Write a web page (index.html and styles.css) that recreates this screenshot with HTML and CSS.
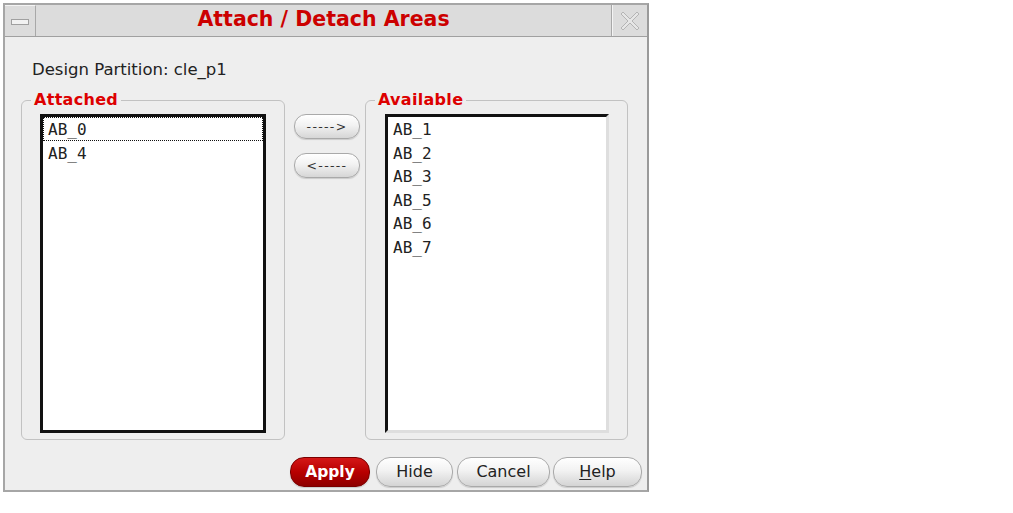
FILE: index.html
```html
<!DOCTYPE html>
<html>
<head>
<meta charset="utf-8">
<link rel="stylesheet" href="styles.css">
</head>
<body>
<div class="window">
  <div class="titlebar">
    <div class="tb-min"><span class="min-bar"></span></div>
    <div class="title">Attach / Detach Areas</div>
    <div class="tb-close">
      <svg width="22" height="22" viewBox="0 0 22 22">
        <path d="M2 4 L4 2 L11 9 L18 2 L20 4 L13 11 L20 18 L18 20 L11 13 L4 20 L2 18 L9 11 Z" fill="#e6e6e6" stroke="#b4b4b4" stroke-width="1"/>
      </svg>
    </div>
  </div>
  <div class="content">
    <div class="partition">Design Partition: cle_p1</div>
    <div class="groups">
      <fieldset class="group group-left">
        <legend>Attached</legend>
        <div class="listbox focused">
          <div class="row selected">AB_0</div>
          <div class="row">AB_4</div>
        </div>
      </fieldset>
      <div class="movers">
        <button class="mover">-----&gt;</button>
        <button class="mover">&lt;-----</button>
      </div>
      <fieldset class="group group-right">
        <legend>Available</legend>
        <div class="listbox">
          <div class="row">AB_1</div>
          <div class="row">AB_2</div>
          <div class="row">AB_3</div>
          <div class="row">AB_5</div>
          <div class="row">AB_6</div>
          <div class="row">AB_7</div>
        </div>
      </fieldset>
    </div>
    <div class="actions">
      <button class="btn btn-apply">Apply</button>
      <button class="btn btn-hide">Hide</button>
      <button class="btn btn-cancel">Cancel</button>
      <button class="btn btn-help"><u>H</u>elp</button>
    </div>
  </div>
</div>
</body>
</html>
```
FILE: styles.css
```css
html, body {
  margin: 0;
  padding: 0;
  background: #ffffff;
}
body {
  font-family: "DejaVu Sans", "Liberation Sans", sans-serif;
  color: #222;
}
.window {
  margin: 3px 0 0 3px;
  width: 642px;
  height: 485px;
  border: 2px solid #a6a6a6;
  border-right-color: #9a9a9a;
  background: #eeeeee;
  display: flex;
  flex-direction: column;
}
.titlebar {
  height: 31px;
  display: flex;
  border-bottom: 1px solid #a0a0a0;
  background: #dcdcdc;
}
.tb-min {
  width: 30px;
  border-right: 1px solid #a8a8a8;
  border-top: 1px solid #f4f4f4;
  display: flex;
  align-items: center;
  justify-content: center;
}
.min-bar {
  display: block;
  width: 16px;
  height: 4px;
  border: 1px solid #a0a0a0;
  background: #f2f2f2;
  margin-top: 2px;
}
.title {
  flex: 1;
  display: flex;
  align-items: center;
  justify-content: center;
  padding-bottom: 4px;
  font-weight: bold;
  font-size: 20.5px;
  color: #cc0000;
  border-right: 1px solid #a8a8a8;
}
.tb-close {
  width: 34px;
  display: flex;
  align-items: center;
  justify-content: center;
  border-left: 1px solid #f4f4f4;
}
.content {
  flex: 1;
  display: flex;
  flex-direction: column;
  padding: 23px 0 0 16px;
}
.partition {
  font-size: 16.5px;
  line-height: 20px;
  margin-left: 11px;
  color: #222;
}
.groups {
  display: flex;
  align-items: flex-start;
  margin-top: 12px;
}
.group {
  margin: 0;
  border: 1px solid #c2c2c2;
  border-radius: 6px;
  padding: 6px 18px 6px 18px;
  min-width: 0;
}
.group legend {
  font-weight: bold;
  font-size: 16px;
  letter-spacing: 0.3px;
  line-height: 16px;
  color: #dd0000;
  padding: 0 3px;
  margin-left: -9px;
}
.group-left {
  width: 226px;
}
.group-right {
  width: 224px;
  padding-left: 19px;
  margin-left: 5px;
}
.group-right legend {
  margin-left: -10px;
}
.listbox {
  box-sizing: border-box;
  height: 319px;
  background: #ffffff;
  border: 3px solid #111;
  border-right-color: #dedede;
  border-bottom-color: #dedede;
  font-family: "DejaVu Sans Mono", "Liberation Mono", monospace;
  font-size: 16px;
  color: #222;
}
.listbox.focused {
  border-color: #111;
}
.row {
  box-sizing: border-box;
  height: 23.5px;
  line-height: 18.5px;
  padding: 3px 0 0 4px;
  border: 1px solid transparent;
}
.row.selected {
  border: 1px dotted #111;
}
.movers {
  display: flex;
  flex-direction: column;
  gap: 14px;
  margin: 22px 0 0 9px;
}
.mover {
  width: 66px;
  height: 25px;
  padding: 0 0 1px 0;
  border: 1px solid #a9a9a9;
  border-radius: 12px;
  background: linear-gradient(#ffffff, #f2f2f2 45%, #d6d6d6);
  box-shadow: 0 1px 1px rgba(0,0,0,0.15);
  font-family: "DejaVu Sans", sans-serif;
  font-size: 12.5px;
  letter-spacing: 1.3px;
  color: #333;
}
.actions {
  display: flex;
  justify-content: flex-end;
  margin-top: 17px;
  padding-right: 5px;
}
.btn {
  box-sizing: border-box;
  height: 30px;
  margin: 0;
  border: 1px solid #a9a9a9;
  border-radius: 14px;
  background: linear-gradient(#ffffff, #f2f2f2 45%, #d4d4d4);
  box-shadow: 0 1px 1px rgba(0,0,0,0.15);
  font-family: "DejaVu Sans", sans-serif;
  font-size: 16px;
  color: #222;
  padding: 0 0 1px 0;
}
.btn-apply {
  width: 80px;
  border-color: #7a0000;
  background: linear-gradient(#d41818, #b80000 50%, #8e0000);
  color: #ffffff;
  font-weight: bold;
  font-size: 15.5px;
}
.btn-hide { width: 77px; margin-left: 6px; }
.btn-cancel { width: 93px; margin-left: 4px; }
.btn-help { width: 89px; margin-left: 3px; }
.btn-help u {
  text-decoration-thickness: 1px;
  text-underline-offset: 2px;
}
```
